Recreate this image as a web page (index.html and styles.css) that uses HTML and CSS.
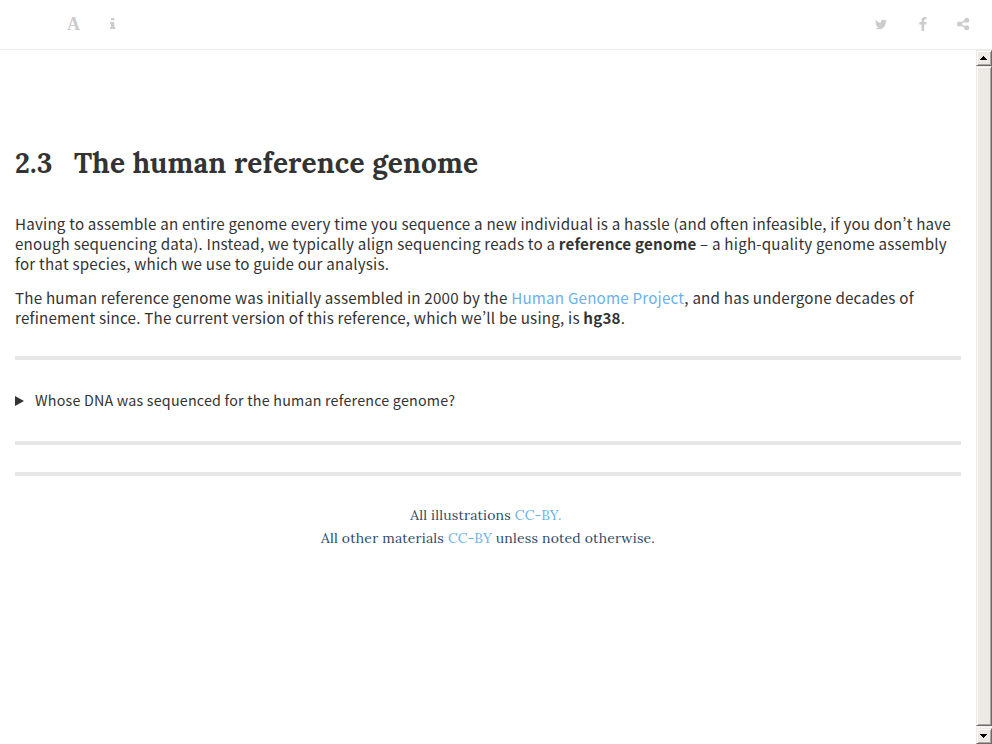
FILE: index.html
```html
<!DOCTYPE html>
<html lang="en">
<head>
<meta charset="utf-8">
<title>2.3 The human reference genome</title>
<link rel="stylesheet" href="styles.css">
</head>
<body>
<header class="toolbar">
  <div class="tools">
    <span class="letter">A</span>
    <svg class="icon" viewBox="0 0 16 16"><path d="M6 2h3.300v2.300H6zM5 6h4.300v5.200h1v1.900H5v-1.900h1V7.800H5z"/></svg>
  </div>
  <div class="share">
    <svg class="icon twitter" viewBox="44 128 1576 1280"><path d="M1620 280q-67 98-162 167 1 14 1 42 0 130-38 259.500T1305.500 997 1121 1207.500t-258 146-323 54.500q-271 0-496-145 35 4 78 4 225 0 401-138-105-2-188-64.500T221 905q33 5 61 5 43 0 85-11-112-23-185.500-111.500T108 582v-4q68 38 146 41-66-44-105-115t-39-154q0-88 44-163 121 149 294.500 238.500T820 525q-8-38-8-74 0-134 94.500-228.500T1135 128q140 0 236 102 109-21 205-78-37 115-142 178 93-10 186-50z"/></svg>
    <svg class="icon facebook" viewBox="95 0 864 1664"><path d="M959 12v264H802q-86 0-116 36t-30 108v189h293l-39 296H656v759H350V905H95V609h255V391q0-186 104-288.500T731 0q147 0 228 12z"/></svg>
    <svg class="icon nodes" viewBox="0 0 16 16"><path class="link" d="M4 8l8-4M4 8l8 4"/><circle cx="4.500" cy="8" r="2.500"/><circle cx="11.700" cy="4.300" r="2.500"/><circle cx="11.700" cy="11.700" r="2.500"/></svg>
  </div>
</header>
<div class="viewport">
  <main>
    <h1><span class="number">2.3</span><span class="title">The human reference genome</span></h1>
    <p><span class="line first">Having to assemble an entire genome every time you sequence a new individual is a hassle (and o<span class="liga">ft</span>en infeasible, if you don<span class="apos">’</span>t have</span>
    <span class="line">enough sequencing data). Instead, we typically align sequencing reads to a <b>reference genome</b> – a high-quality genome assembly</span>
    <span class="line">for that species, which we use to guide our analysis.</span></p>
    <p><span class="line">The human reference genome was initially assembled in 2000 by the <a>Human Genome Project</a>, and has undergone decades of</span>
    <span class="line">refinement since. The current version of this reference, which we<span class="apos">’</span>ll be using, is <b>hg38</b>.</span></p>
    <hr>
    <div class="question"><svg class="marker" viewBox="0 0 9 10"><path d="M0 0l9 5-9 5z"/></svg><span>Whose DNA was sequenced for the human reference genome?</span></div>
    <hr>
    <hr class="last">
    <footer>
      <div class="credit">All illustrations <a>CC-BY.</a></div>
      <div>All other materials <a>CC-BY</a> unless noted otherwise.</div>
    </footer>
  </main>
  <div class="scrollbar">
    <div class="button"><svg viewBox="0 0 7 4" shape-rendering="crispEdges"><path d="M3 0h1v1h1v1h1v1h1v1H0V3h1V2h1V1h1z"/></svg></div>
    <div class="thumb"></div>
    <div class="button"><svg viewBox="0 0 7 4" shape-rendering="crispEdges"><path d="M0 0h7v1H6v1H5v1H4v1H3V3H2V2H1V1H0z"/></svg></div>
  </div>
</div>
</body>
</html>
```
FILE: styles.css
```css
* { box-sizing: border-box; }
body { margin: 0; height: 744px; overflow: hidden; background: #fff; color: #333; letter-spacing: .2px; font-family: "Source Sans Pro", "Noto Sans CJK SC", sans-serif; }
a { color: #6cb1ea; }
.toolbar { height: 50px; border-bottom: 1px solid #ebebeb; display: flex; justify-content: space-between; padding: 0 21px 0 67px; }
.tools, .share { display: flex; align-items: center; height: 48px; }
.icon { width: 16px; height: 16px; fill: #ccc; display: block; }
.letter { font: bold 18px/50px "Liberation Serif", serif; color: #ccc; width: 38px; }
.twitter { width: 12px; height: 11px; margin-right: 32px; }
.facebook { width: 8px; height: 14px; margin-right: 28px; }
.link { fill: none; stroke: #ccc; stroke-width: 1.8; }
.viewport { display: flex; height: 694px; }
main { flex: 1; padding: 92px 15px 0; min-width: 0; }
h1 { margin: 0 0 29px; font: bold 28px/42px "Lora", "Noto Serif", "Liberation Serif", serif; letter-spacing: .17px; display: flex; white-space: nowrap; }
.number { width: 59px; }
p { margin: 0 0 14px; font-size: 15.180px; line-height: 20px; }
.line { display: block; white-space: nowrap; width: max-content; }
.first { letter-spacing: .19px; }
.liga { font-feature-settings: "liga" 1; }
.apos { font-feature-settings: "pwid" 1; }
hr { height: 4px; border: 0; margin: 29px 0 0; background: #e7e7e7; }
.question { display: flex; align-items: center; height: 25px; margin: 27px 0 29px; font-size: 14.300px; white-space: nowrap; }
.question + hr { margin-top: 0; }
.marker { width: 9px; height: 10px; margin: 2px 11px 0 0; fill: #333; }
hr.last { margin-top: 27px; }
footer { margin-top: 28px; text-align: center; font: 14px/23px "Lora", "Liberation Serif", serif; color: #2c4a68; letter-spacing: .18px; }
.credit { padding-right: 4px; }
.scrollbar { width: 16px; display: flex; flex-direction: column; background: #f5f4f2; }
.button, .thumb { background: #edeae5; border: 1px solid; border-color: #edeae5 #6c6a66 #6c6a66 #edeae5; box-shadow: inset 1px 1px #fff, inset -1px -1px #aaa7a2; }
.button { height: 16px; display: flex; align-items: center; padding-left: 3px; }
.button svg { width: 7px; height: 4px; }
.thumb { flex: 1; margin-bottom: 2px; }
```
